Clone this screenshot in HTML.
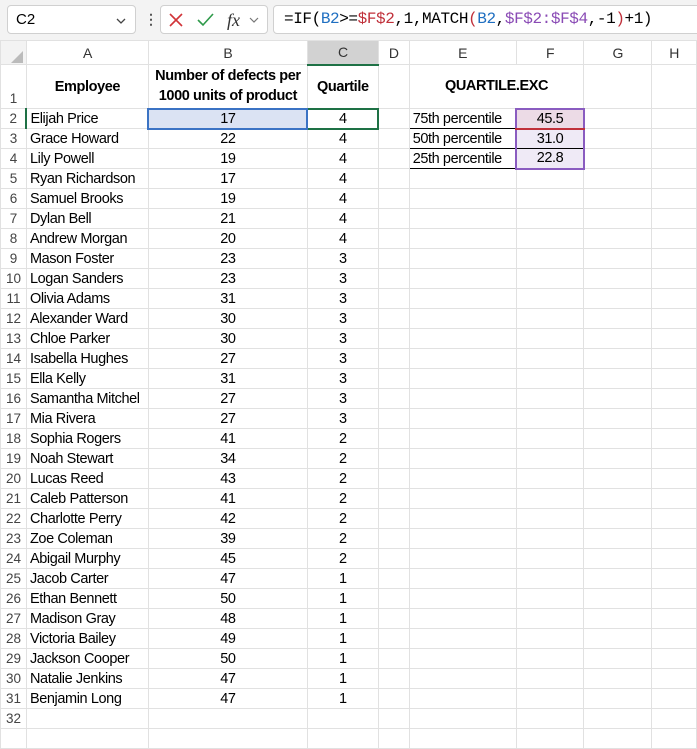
<!DOCTYPE html>
<html><head><meta charset="utf-8"><style>
*{margin:0;padding:0;box-sizing:border-box}
body{width:697px;height:732px;overflow:hidden;background:#fff;font-family:"Liberation Sans",sans-serif;position:relative;color:#000}
.fb{position:absolute;top:0;left:0;width:697px;height:40px;background:#f3f3f3}
.nb{position:absolute;left:7px;top:5px;width:129px;height:29px;background:#fff;border:1px solid #d0d0d0;border-radius:4px;font-size:15px;padding:5px 0 0 8px}
.fx{position:absolute;left:160px;top:5px;width:108px;height:29px;background:#fff;border:1px solid #d0d0d0;border-radius:4px}
.fm{position:absolute;left:273px;top:5px;width:430px;height:29px;background:#fff;border:1px solid #d0d0d0;border-radius:4px;font-family:"Liberation Mono",monospace;font-size:16px;padding:4px 0 0 10px;letter-spacing:-0.4px}
table{position:absolute;top:40px;left:0;border-collapse:collapse;table-layout:fixed;font-size:14.5px;letter-spacing:-0.4px}
td{border:1px solid #e1e1e1;height:20px;padding:0 3px;white-space:nowrap;overflow:hidden;line-height:18px}
td.h{text-align:center;color:#333;font-size:14px;background:#fff}
td.r{text-align:center;color:#444;font-size:13.5px;padding:0;letter-spacing:0}
.c{text-align:center}
.b{font-weight:bold}
</style></head><body>
<div class="fb">
<div class="nb">C2<svg width="12" height="8" style="position:absolute;right:8px;top:11px"><path d="M2 2 L6 6 L10 2" stroke="#444" stroke-width="1.3" fill="none"/></svg></div>
<div style="position:absolute;left:144px;top:11px;font-size:14px;color:#555;font-weight:bold">&#8942;</div>
<div class="fx">
<svg width="108" height="29" style="position:absolute;left:0;top:0"><path d="M9 8 L21 20 M21 8 L9 20" stroke="#d13438" stroke-width="1.6" fill="none"/><path d="M37 14 L42 19 L52 8" stroke="#2e9a4a" stroke-width="1.6" fill="none"/><text x="66" y="20" font-family="Liberation Serif" font-style="italic" font-size="18" fill="#333">fx</text><path d="M89 12 L93 16 L97 12" stroke="#777" stroke-width="1.2" fill="none"/></svg>
</div>
<div class="fm">=IF(<span style="color:#1f6fc1">B2</span>&gt;=<span style="color:#c0303a">$F$2</span>,1,MATCH<span style="color:#c0303a">(</span><span style="color:#1f6fc1">B2</span>,<span style="color:#8a4bb5">$F$2:$F$4</span>,-1<span style="color:#c0303a">)</span>+1)</div>
</div>
<table>
<colgroup><col style="width:26px"><col style="width:122px"><col style="width:159px"><col style="width:71px"><col style="width:31px"><col style="width:107px"><col style="width:68px"><col style="width:68px"><col style="width:45px"></colgroup>
<tr style="height:24px"><td class="h" style="background:#f3f3f3"><svg width="12" height="12" style="position:relative;top:5px;left:4px"><path d="M12 0 L12 12 L0 12Z" fill="#bbb"/></svg></td><td class="h">A</td><td class="h">B</td><td class="h" style="background:#d2d2d2;border-bottom:2px solid #1e7145">C</td><td class="h">D</td><td class="h">E</td><td class="h">F</td><td class="h">G</td><td class="h">H</td></tr>
<tr style="height:44px"><td class="r" style="vertical-align:bottom">1</td><td class="c b">Employee</td><td class="c b" style="line-height:20px">Number of defects per<br>1000 units of product</td><td class="c b">Quartile</td><td></td><td class="c b" colspan="2">QUARTILE.EXC</td><td></td><td></td></tr>
<tr><td class="r">2</td><td style="border-top:1px solid #000;border-left:2px solid #1e7145">Elijah Price</td><td class="c" style="background:#dbe3f3;border:2px solid #3b73c4">17</td><td class="c" style="border:2px solid #1e7145">4</td><td></td><td style="border-top:1px solid #000;border-bottom:1px solid #000">75th percentile</td><td class="c" style="background:#ecdbe6;border:2px solid #8a5cc0;border-bottom:2px solid #c0303a">45.5</td><td></td><td></td></tr>
<tr><td class="r">3</td><td>Grace Howard</td><td class="c">22</td><td class="c">4</td><td></td><td style="border-bottom:1px solid #000">50th percentile</td><td class="c" style="background:#efeaf6;border-left:2px solid #8a5cc0;border-right:2px solid #8a5cc0;border-bottom:1px solid #000">31.0</td><td></td><td></td></tr>
<tr><td class="r">4</td><td>Lily Powell</td><td class="c">19</td><td class="c">4</td><td></td><td style="border-bottom:1px solid #000">25th percentile</td><td class="c" style="background:#efeaf6;border:2px solid #8a5cc0;border-top:1px solid #000">22.8</td><td></td><td></td></tr>
<tr><td class="r">5</td><td>Ryan Richardson</td><td class="c">17</td><td class="c">4</td><td></td><td></td><td></td><td></td><td></td></tr>
<tr><td class="r">6</td><td>Samuel Brooks</td><td class="c">19</td><td class="c">4</td><td></td><td></td><td></td><td></td><td></td></tr>
<tr><td class="r">7</td><td>Dylan Bell</td><td class="c">21</td><td class="c">4</td><td></td><td></td><td></td><td></td><td></td></tr>
<tr><td class="r">8</td><td>Andrew Morgan</td><td class="c">20</td><td class="c">4</td><td></td><td></td><td></td><td></td><td></td></tr>
<tr><td class="r">9</td><td>Mason Foster</td><td class="c">23</td><td class="c">3</td><td></td><td></td><td></td><td></td><td></td></tr>
<tr><td class="r">10</td><td>Logan Sanders</td><td class="c">23</td><td class="c">3</td><td></td><td></td><td></td><td></td><td></td></tr>
<tr><td class="r">11</td><td>Olivia Adams</td><td class="c">31</td><td class="c">3</td><td></td><td></td><td></td><td></td><td></td></tr>
<tr><td class="r">12</td><td>Alexander Ward</td><td class="c">30</td><td class="c">3</td><td></td><td></td><td></td><td></td><td></td></tr>
<tr><td class="r">13</td><td>Chloe Parker</td><td class="c">30</td><td class="c">3</td><td></td><td></td><td></td><td></td><td></td></tr>
<tr><td class="r">14</td><td>Isabella Hughes</td><td class="c">27</td><td class="c">3</td><td></td><td></td><td></td><td></td><td></td></tr>
<tr><td class="r">15</td><td>Ella Kelly</td><td class="c">31</td><td class="c">3</td><td></td><td></td><td></td><td></td><td></td></tr>
<tr><td class="r">16</td><td>Samantha Mitchel</td><td class="c">27</td><td class="c">3</td><td></td><td></td><td></td><td></td><td></td></tr>
<tr><td class="r">17</td><td>Mia Rivera</td><td class="c">27</td><td class="c">3</td><td></td><td></td><td></td><td></td><td></td></tr>
<tr><td class="r">18</td><td>Sophia Rogers</td><td class="c">41</td><td class="c">2</td><td></td><td></td><td></td><td></td><td></td></tr>
<tr><td class="r">19</td><td>Noah Stewart</td><td class="c">34</td><td class="c">2</td><td></td><td></td><td></td><td></td><td></td></tr>
<tr><td class="r">20</td><td>Lucas Reed</td><td class="c">43</td><td class="c">2</td><td></td><td></td><td></td><td></td><td></td></tr>
<tr><td class="r">21</td><td>Caleb Patterson</td><td class="c">41</td><td class="c">2</td><td></td><td></td><td></td><td></td><td></td></tr>
<tr><td class="r">22</td><td>Charlotte Perry</td><td class="c">42</td><td class="c">2</td><td></td><td></td><td></td><td></td><td></td></tr>
<tr><td class="r">23</td><td>Zoe Coleman</td><td class="c">39</td><td class="c">2</td><td></td><td></td><td></td><td></td><td></td></tr>
<tr><td class="r">24</td><td>Abigail Murphy</td><td class="c">45</td><td class="c">2</td><td></td><td></td><td></td><td></td><td></td></tr>
<tr><td class="r">25</td><td>Jacob Carter</td><td class="c">47</td><td class="c">1</td><td></td><td></td><td></td><td></td><td></td></tr>
<tr><td class="r">26</td><td>Ethan Bennett</td><td class="c">50</td><td class="c">1</td><td></td><td></td><td></td><td></td><td></td></tr>
<tr><td class="r">27</td><td>Madison Gray</td><td class="c">48</td><td class="c">1</td><td></td><td></td><td></td><td></td><td></td></tr>
<tr><td class="r">28</td><td>Victoria Bailey</td><td class="c">49</td><td class="c">1</td><td></td><td></td><td></td><td></td><td></td></tr>
<tr><td class="r">29</td><td>Jackson Cooper</td><td class="c">50</td><td class="c">1</td><td></td><td></td><td></td><td></td><td></td></tr>
<tr><td class="r">30</td><td>Natalie Jenkins</td><td class="c">47</td><td class="c">1</td><td></td><td></td><td></td><td></td><td></td></tr>
<tr><td class="r">31</td><td>Benjamin Long</td><td class="c">47</td><td class="c">1</td><td></td><td></td><td></td><td></td><td></td></tr>
<tr><td class="r">32</td><td></td><td></td><td></td><td></td><td></td><td></td><td></td><td></td></tr>
<tr><td class="r"></td><td></td><td></td><td></td><td></td><td></td><td></td><td></td><td></td></tr>
</table>
</body></html>
